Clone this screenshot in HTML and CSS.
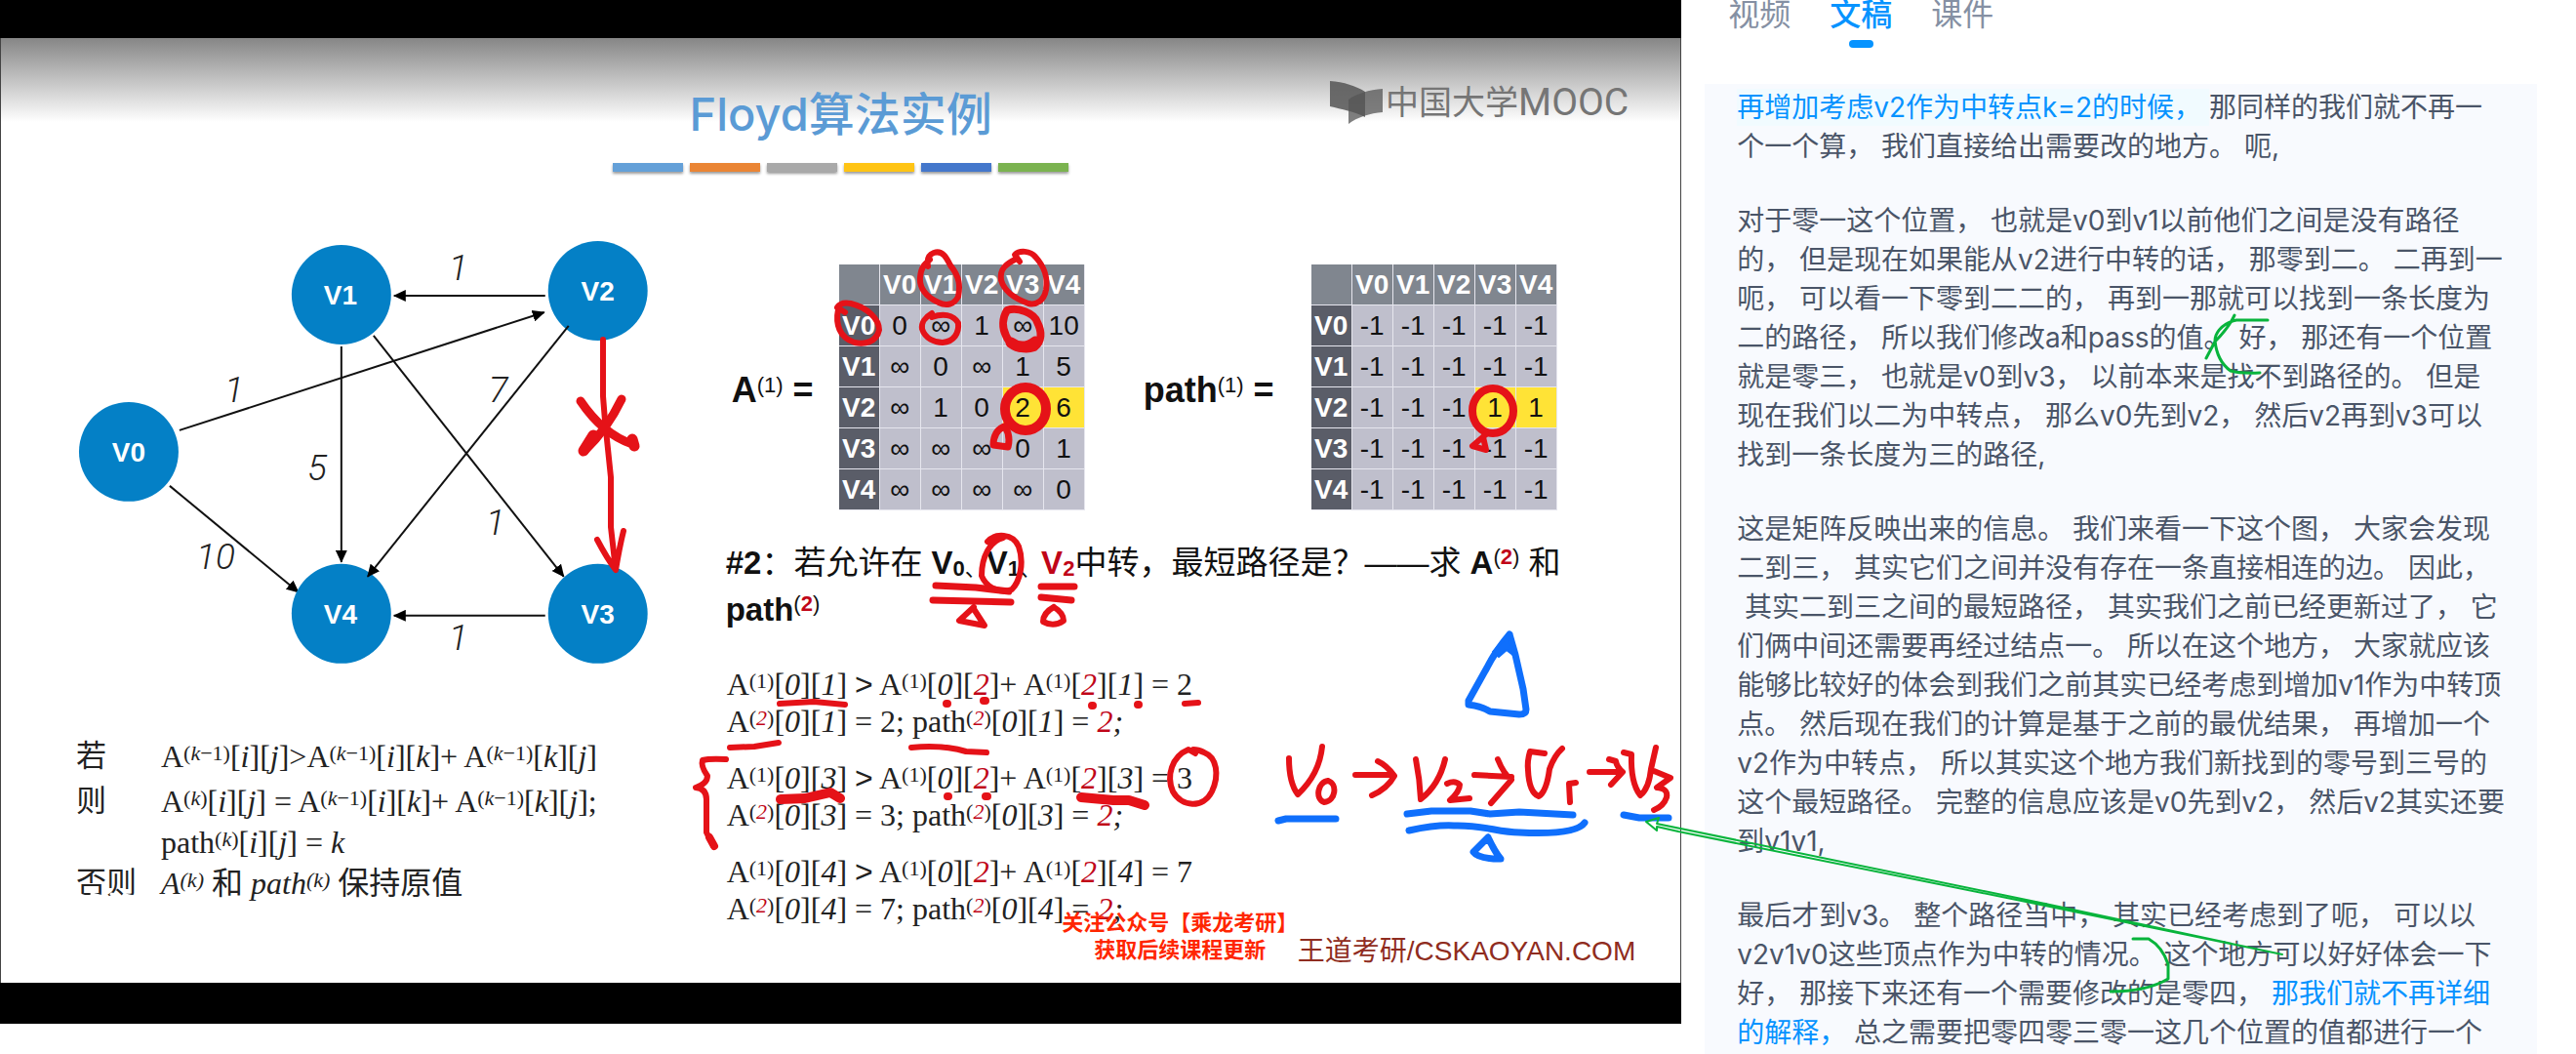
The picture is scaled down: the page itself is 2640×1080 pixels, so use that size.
FILE: index.html
```html
<!DOCTYPE html>
<html lang="zh-CN">
<head>
<meta charset="utf-8">
<meta name="viewport" content="width=device-width, initial-scale=1">
<title>Floyd算法实例</title>
<link rel="stylesheet" href="styles.css">
</head>
<body>
<main class="page">
  <section class="player">
    <article class="slide">
      <header class="slide-head">
        <div class="title-block">
          <h1>Floyd算法实例</h1>
          <div class="bars"><i class="b1"></i><i class="b2"></i><i class="b3"></i><i class="b4"></i><i class="b5"></i><i class="b6"></i></div>
        </div>
        <div class="logo">
          <svg viewBox="0 0 54 44" width="54" height="44" aria-hidden="true">
            <path d="M0 0C14 1 27 5 36 11V37C25 31 12 29 0 26Z" fill="#555" fill-opacity=".85"/>
            <path d="M54 8C40 9 27 13 19 19V44C28 37 41 33 54 32Z" fill="#555" fill-opacity=".75"/>
          </svg>
          <span class="logo-cn">中国大学</span><span class="logo-en">MOOC</span>
        </div>
      </header>

      <div class="slide-body">
        <div class="left">
          <svg class="graph" viewBox="0 240 744 450" role="img" aria-label="有向图">
            <defs>
              <marker id="tip" markerUnits="userSpaceOnUse" markerWidth="13" markerHeight="12" refX="12" refY="6" orient="auto"><path d="M0 0L13 6L0 12Z"/></marker>
            </defs>
            <g class="edges">
              <path d="M559 303H404"/><path d="M184 441L558 320"/><path d="M350 355V576"/>
              <path d="M383 344L578 591"/><path d="M174 498L306 607"/><path d="M559 631H404"/>
            </g>
            <g class="nodes">
              <circle cx="350" cy="302" r="51"/><circle cx="613" cy="298" r="51"/><circle cx="132" cy="463" r="51"/>
              <circle cx="350" cy="629" r="51"/><circle cx="613" cy="629" r="51"/>
            </g>
            <g class="edges"><path d="M583 334L377 591"/></g>
            <g class="names">
              <text x="349" y="312">V1</text><text x="613" y="308">V2</text><text x="132" y="473">V0</text>
              <text x="349" y="639">V4</text><text x="613" y="639">V3</text>
            </g>
            <g class="costs">
              <text x="470" y="287">1</text><text x="240" y="412">1</text><text x="511" y="412">7</text>
              <text x="325" y="492">5</text><text x="508" y="548">1</text><text x="221" y="583">10</text><text x="470" y="666">1</text>
            </g>
          </svg>
          <dl class="rules">
            <dt class="spaced">若</dt><dd class="spaced">A<sup>(<i>k</i>−1)</sup>[<i>i</i>][<i>j</i>]&gt;A<sup>(<i>k</i>−1)</sup>[<i>i</i>][<i>k</i>]+ A<sup>(<i>k</i>−1)</sup>[<i>k</i>][<i>j</i>]</dd>
            <dt>则</dt><dd>A<sup>(<i>k</i>)</sup>[<i>i</i>][<i>j</i>] = A<sup>(<i>k</i>−1)</sup>[<i>i</i>][<i>k</i>]+ A<sup>(<i>k</i>−1)</sup>[<i>k</i>][<i>j</i>];</dd>
            <dt></dt><dd>path<sup>(<i>k</i>)</sup>[<i>i</i>][<i>j</i>] = <i>k</i></dd>
            <dt>否则</dt><dd><i>A</i><sup><i>(k)</i></sup> 和 <i>path</i><sup><i>(k)</i></sup> 保持原值</dd>
          </dl>
        </div>

        <div class="right">
          <div class="matrices">
            <span class="m-label">A<sup>(1)</sup> =</span>
            <table>
              <tr><th></th><th>V0</th><th>V1</th><th>V2</th><th>V3</th><th>V4</th></tr>
              <tr><th>V0</th><td>0</td><td>∞</td><td>1</td><td>∞</td><td>10</td></tr>
              <tr><th>V1</th><td>∞</td><td>0</td><td>∞</td><td>1</td><td>5</td></tr>
              <tr><th>V2</th><td>∞</td><td>1</td><td>0</td><td class="hit">2</td><td class="hit">6</td></tr>
              <tr><th>V3</th><td>∞</td><td>∞</td><td>∞</td><td>0</td><td>1</td></tr>
              <tr><th>V4</th><td>∞</td><td>∞</td><td>∞</td><td>∞</td><td>0</td></tr>
            </table>
            <span class="m-label m-path">path<sup>(1)</sup> =</span>
            <table>
              <tr><th></th><th>V0</th><th>V1</th><th>V2</th><th>V3</th><th>V4</th></tr>
              <tr><th>V0</th><td>-1</td><td>-1</td><td>-1</td><td>-1</td><td>-1</td></tr>
              <tr><th>V1</th><td>-1</td><td>-1</td><td>-1</td><td>-1</td><td>-1</td></tr>
              <tr><th>V2</th><td>-1</td><td>-1</td><td>-1</td><td class="hit">1</td><td class="hit">1</td></tr>
              <tr><th>V3</th><td>-1</td><td>-1</td><td>-1</td><td>-1</td><td>-1</td></tr>
              <tr><th>V4</th><td>-1</td><td>-1</td><td>-1</td><td>-1</td><td>-1</td></tr>
            </table>
          </div>

          <p class="question"><b>#2</b>：若允许在 <b>V</b><sub><b>0</b>、</sub><b>V</b><sub><b>1</b>、</sub><b class="red">V</b><sub class="red"><b>2</b></sub>中转，最短路径是？——求 <b>A</b><sup>(<b class="red">2</b>)</sup> 和<br><b>path</b><sup>(<b class="red">2</b>)</sup></p>

          <div class="steps">
            <p>A<sup>(1)</sup>[<i>0</i>][<i>1</i>] <span class="gt">&gt;</span> A<sup>(1)</sup>[<i>0</i>][<i class="red">2</i>]+ A<sup>(1)</sup>[<i class="red">2</i>][<i>1</i>] = 2<br>A<sup>(<i class="red">2</i>)</sup>[<i>0</i>][<i>1</i>] = 2; path<sup>(<i class="red">2</i>)</sup>[<i>0</i>][<i>1</i>] = <i><span class="red">2</span>;</i></p>
            <p>A<sup>(1)</sup>[<i>0</i>][<i>3</i>] <span class="gt">&gt;</span> A<sup>(1)</sup>[<i>0</i>][<i class="red">2</i>]+ A<sup>(1)</sup>[<i class="red">2</i>][<i>3</i>] = 3<br>A<sup>(<i class="red">2</i>)</sup>[<i>0</i>][<i>3</i>] = 3; path<sup>(<i class="red">2</i>)</sup>[<i>0</i>][<i>3</i>] = <i><span class="red">2</span>;</i></p>
            <p>A<sup>(1)</sup>[<i>0</i>][<i>4</i>] <span class="gt">&gt;</span> A<sup>(1)</sup>[<i>0</i>][<i class="red">2</i>]+ A<sup>(1)</sup>[<i class="red">2</i>][<i>4</i>] = 7<br>A<sup>(<i class="red">2</i>)</sup>[<i>0</i>][<i>4</i>] = 7; path<sup>(<i class="red">2</i>)</sup>[<i>0</i>][<i>4</i>] = <i><span class="red">2</span>;</i></p>
          </div>
        </div>
      </div>

      <footer class="slide-foot">
        <p class="promo">关注公众号【乘龙考研】<br>获取后续课程更新</p>
        <p class="brand">王道考研/CSKAOYAN.COM</p>
      </footer>
    </article>
  </section>

  <aside class="side">
    <nav class="tabs">
      <button type="button">视频</button>
      <button type="button" class="active">文稿</button>
      <button type="button">课件</button>
    </nav>
    <div class="script">
      <p><mark>再增加考虑v2作为中转点k=2的时候， </mark>那同样的我们就不再一<br>个一个算， 我们直接给出需要改的地方。 呃,</p>
      <p>对于零一这个位置， 也就是v0到v1以前他们之间是没有路径<br>的， 但是现在如果能从v2进行中转的话， 那零到二。 二再到一<br>呃， 可以看一下零到二二的， 再到一那就可以找到一条长度为<br>二的路径， 所以我们修改a和pass的值。 好， 那还有一个位置<br>就是零三， 也就是v0到v3， 以前本来是找不到路径的。 但是<br>现在我们以二为中转点， 那么v0先到v2， 然后v2再到v3可以<br>找到一条长度为三的路径,</p>
      <p>这是矩阵反映出来的信息。 我们来看一下这个图， 大家会发现<br>二到三， 其实它们之间并没有存在一条直接相连的边。 因此，<br>&nbsp;其实二到三之间的最短路径， 其实我们之前已经更新过了， 它<br>们俩中间还需要再经过结点一。 所以在这个地方， 大家就应该<br>能够比较好的体会到我们之前其实已经考虑到增加v1作为中转顶<br>点。 然后现在我们的计算是基于之前的最优结果， 再增加一个<br>v2作为中转点， 所以其实这个地方我们新找到的零号到三号的<br>这个最短路径。 完整的信息应该是v0先到v2， 然后v2其实还要<br>到v1v1,</p>
      <p>最后才到v3。 整个路径当中， 其实已经考虑到了呃， 可以以<br>v2v1v0这些顶点作为中转的情况。 这个地方可以好好体会一下<br>好， 那接下来还有一个需要修改的是零四， <em>那我们就不再详细<br>的解释，</em> 总之需要把零四零三零一这几个位置的值都进行一个</p>
    </div>
  </aside>

  <svg class="ink" viewBox="0 0 2640 1080" preserveAspectRatio="xMinYMin meet" aria-hidden="true">
    <g class="pen-red">
      <path d="M618 348V406L620 431L626 489V540L631 584M612 553Q622 572 631 584Q635 560 639 544"/>
      <path d="M595 411Q618 445 648 455M637 409Q622 440 599 462" stroke-width="9"/>
      <path d="M648 450L650 457M608 446L598 462" stroke-width="11"/>
      <path d="M951 273Q949 262 957 259C966 256 970 264 974 272C984 284 984 294 982 304C978 312 970 314 962 310C948 304 942 294 943 284C944 274 947 271 953 266"/>
      <path d="M1045 268L1040 261C1045 256 1056 257 1061 263C1071 274 1074 284 1072 297C1070 308 1062 313 1054 311C1040 306 1029 298 1026 287C1024 275 1032 270 1042 265"/>
      <path d="M866 320L858 315Q862 309 872 311C889 315 901 327 901 338C898 351 886 353 876 351C860 346 856 332 859 317"/>
      <path d="M955 321C948 325 944 331 945 337C948 347 958 351 966 351C978 350 983 341 982 331C977 322 966 321 955 325"/>
      <path d="M1032 318C1043 314 1060 321 1063 330C1068 340 1068 350 1060 356C1046 361 1034 352 1031 344C1027 336 1027 326 1032 318Z" stroke-width="8"/>
      <path d="M1036 351Q1048 360 1061 350" stroke-width="11"/>
      <ellipse cx="1051" cy="419" rx="21" ry="22" stroke-width="10"/>
      <path d="M1030 437Q1036 447 1033 458L1018 456Q1018 442 1029 437" stroke-width="7"/>
      <ellipse cx="1530" cy="421" rx="21" ry="23" stroke-width="8"/>
      <path d="M1523 445L1509 457L1523 461L1520 448"/>
      <path d="M1012 555C1020 546 1038 546 1044 560C1050 577 1045 596 1037 604C1022 609 1010 600 1006 590C1006 570 1015 554 1028 551"/>
      <path d="M959 600L1000 602L1034 606M956 615L1036 617M1067 601H1101M1067 612L1098 615" stroke-width="7"/>
      <path d="M998 622L983 636L1009 641L998 624M1080 622Q1069 628 1069 637Q1080 643 1090 636Q1090 628 1080 622"/>
      <path d="M799 721L834 719L866 722M1214 721L1228 720M748 766L773 765L798 761M934 766Q966 763 990 770L1011 771"/>
      <path d="M744 778Q727 777 720 779Q718 785 725 795Q725 803 713 807Q724 808 724 819V853L731 867"/>
      <path d="M727 858L732 867M970 721h1M1008 718h2M1119 723h1M1166 722h1M971 816h1M1010 816h2" stroke-width="8"/>
      <path d="M800 819L825 818L851 812L861 818M1108 817L1141 820L1157 820L1173 825" stroke-width="10"/>
      <path d="M1225 772L1218 768C1201 775 1195 795 1202 811C1211 827 1233 829 1242 811C1250 794 1247 776 1234 771Q1228 768 1223 768"/>
      <path d="M1321 777Q1321 802 1330 814C1345 800 1353 785 1355 765M1361 800C1351 801 1347 818 1357 822C1369 821 1371 803 1361 800M1389 794H1428M1412 780Q1421 784 1429 795Q1422 808 1406 815"/>
      <path d="M1451 778Q1455 798 1456 819Q1475 804 1481 778M1483 803Q1491 799 1496 804Q1496 811 1486 820L1506 818M1511 794L1549 796M1535 778Q1541 793 1549 799L1528 823"/>
      <path d="M1583 772L1568 770Q1565 780 1566 789Q1567 812 1577 816Q1585 811 1588 788Q1593 774 1601 767M1609 822L1608 803L1615 802M1629 791H1662M1649 778L1656 780Q1657 786 1663 791L1651 804"/>
      <path d="M1664 771L1672 773Q1671 802 1681 815Q1690 808 1692 788L1697 766M1695 790L1712 797L1698 807Q1710 808 1708 817Q1705 826 1695 830"/>
    </g>
    <g class="pen-blue">
      <path d="M1547 650Q1532 668 1524 684L1505 718V722Q1519 724 1527 729L1557 732Q1564 732 1564 727L1561 706L1553 671L1547 650"/>
      <path d="M1545 651L1530 668L1536 673L1544 666L1553 673Z" fill="#0f6ffc" stroke-width="2"/>
      <path d="M1310 841L1318 839H1369M1442 834L1467 831H1507L1527 834L1557 832L1612 835M1444 851Q1472 845 1490 846C1520 845 1535 853 1557 853Q1615 856 1624 843M1525 858L1510 873Q1515 880 1538 880Q1532 873 1525 858M1664 835L1680 838H1710"/>
    </g>
    <g class="pen-green">
      <path d="M2339 978L2096 926L1698 844L1700 838L1687 842L1698 851V847L1720 852L2096 928Z" stroke-width="2"/>
      <path d="M2324 328H2292C2274 332 2270 344 2270 349Q2272 370 2286 380Q2296 383 2316 382M2290 323Q2284 336 2270 350L2261 367M2186 962H2202Q2216 970 2222 988V1003Q2200 1016 2163 1016" stroke-width="3"/>
    </g>
    <path class="smudge" d="M82 917L88 919M94 916L106 919M114 916L122 918M128 917L137 919"/>
  </svg>
</main>
</body>
</html>
```
FILE: styles.css
```css
* { box-sizing: border-box; }
body { margin: 0; background: #fff; font-family: "Liberation Sans", "Noto Sans CJK SC", sans-serif; text-spacing-trim: space-all; }
h1, p, dl, dd { margin: 0; }
sup, sub { line-height: 0; }
.page { position: relative; display: grid; grid-template-columns: 1724fr 916fr; align-items: start; min-height: 100vh; overflow: hidden; }

/* video */
.player { background: #000; padding: 39px 0 42px; }
.slide { background: linear-gradient(#868686, #fff 86px); box-shadow: inset 1px 0 #444, inset -1px 0 #444; }
.slide-head { display: grid; grid-template-columns: 1fr auto 1fr; padding-top: 44px; }
.title-block { grid-column: 2; display: flex; flex-direction: column; align-items: center; gap: 20px; padding-top: 4px; }
h1 { font: 500 47px/60px Inter, "Noto Sans CJK SC", sans-serif; color: #5b9bd5; }
.bars { display: flex; gap: 7px; }
.bars i { width: 72px; height: 9px; box-shadow: 0 2px 3px #0006; }
.b1 { background: #64a0d8; }
.b2 { background: #ea8535; }
.b3 { background: #a9a9a9; }
.b4 { background: #ffc415; }
.b5 { background: #4477cb; }
.b6 { background: #7bb350; }
.logo { display: flex; justify-self: end; align-self: start; align-items: center; padding-right: 54px; color: #757575; line-height: 44px; }
.logo svg { margin-right: 3px; }
.logo-cn { font-size: 34px; }
.logo-en { font-family: Roboto, sans-serif; font-size: 39px; }

.slide-body { display: grid; grid-template-columns: 744fr 980fr; }
.left { padding-top: 64px; }
.graph { display: block; width: 100%; }
.edges { fill: none; stroke: #111; stroke-width: 2; }
.edges path { marker-end: url(#tip); }
.nodes { fill: #0480c6; }
.names { fill: #fff; font-size: 28px; font-weight: 700; text-anchor: middle; }
.costs { fill: #222; font: italic 300 37px Roboto, sans-serif; text-anchor: middle; }

.rules { display: grid; grid-template-columns: 87px 1fr; padding: 64px 0 0 78px; font: 32px/42px "Liberation Serif", "Noto Sans CJK SC", serif; color: #222; white-space: nowrap; }
.rules dt { font-size: 31px; }
.rules .spaced { margin-bottom: 4px; }
.rules sup, .steps sup { font-size: 22px; vertical-align: 7px; }

.right { padding-top: 95px; white-space: nowrap; }
.matrices { display: flex; align-items: center; }
.m-label { width: 116px; padding: 6px 0 0 6px; font-size: 36px; font-weight: 700; color: #111; }
.m-path { width: 232px; padding-left: 60px; }
.m-label sup, .question sup { font-size: 22px; font-weight: 400; vertical-align: 10px; }
table { width: 252px; table-layout: fixed; border-collapse: separate; border-spacing: 0; }
th, td { height: 42px; padding: 0; font-size: 28px; line-height: 40px; text-align: center; border-right: 1px solid #e6e6ee; border-bottom: 1px solid #e6e6ee; }
th { background: #5a5d68; color: #fff; }
td { background: #bfbfcc; color: #111; }
tr:first-child th { background: #80868f; }
.hit { background: #ffe336; }
.question { margin-top: 30px; font-size: 33px; line-height: 48px; color: #111; }
.question b { font-size: 33px; }
.question sub { font-size: 22px; vertical-align: -2px; }
.question sub b, .question sup b { font-size: 22px; }
.red { color: #c00518; }
.steps { display: grid; gap: 20px; margin-top: 33px; padding-left: 1px; font: 32px/38px "Liberation Serif", serif; color: #222; }
.gt { font-family: "Liberation Sans", sans-serif; }

.slide-foot { position: relative; padding: 5px 47px 12px; text-align: right; }
.brand { font-size: 28px; line-height: 40px; color: #8f2c20; }
.promo { position: absolute; right: 393px; bottom: 19px; font-size: 22px; font-weight: 700; line-height: 28px; color: #ff2600; text-align: center; }

/* transcript */
.side { display: flex; flex-direction: column; align-self: stretch; padding: 0 40px 0 24px; font-family: Inter, "Noto Sans CJK SC", sans-serif; }
.tabs { display: flex; gap: 40px; height: 86px; padding-left: 24px; align-items: flex-start; }
.tabs button { display: grid; justify-items: center; gap: 17px; padding: 0; border: 0; background: none; font: 32px/24px "Noto Sans CJK SC", sans-serif; color: #8590a3; }
.tabs .active { color: #0693ff; font-weight: 500; }
.tabs .active::after { content: ""; width: 25px; height: 8px; border-radius: 4px; background: #0693ff; }
.script { flex: 1; display: grid; align-content: start; gap: 36px; padding: 4px 33px 0; background: #f8fafe; font-size: 28px; line-height: 40px; color: #4a5568; white-space: nowrap; }
.script mark { padding: 2px 0; background: #f1fbff; color: #0693ff; }
.script em { font-style: normal; color: #0693ff; }

/* handwriting over both columns */
.ink { position: absolute; inset: 0; width: 100%; pointer-events: none; fill: none; stroke-linecap: round; stroke-linejoin: round; }
.pen-red { stroke: #e51218; stroke-width: 6; }
.pen-blue { stroke: #0f6ffc; stroke-width: 7; }
.pen-green { stroke: #08b43c; }
.smudge { stroke: #fff; stroke-width: 3; }
```
